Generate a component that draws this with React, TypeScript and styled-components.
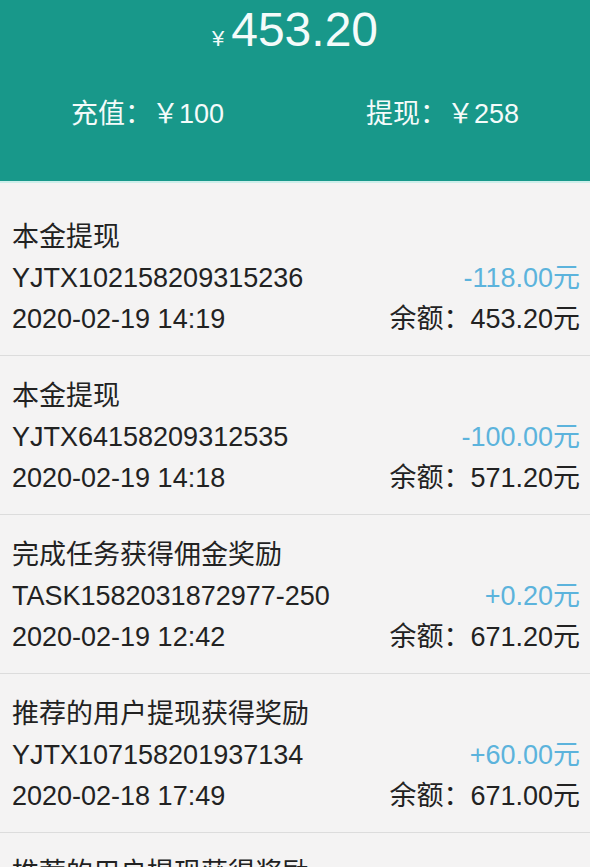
import React from "react";
import styled, { createGlobalStyle } from "styled-components";

const GlobalStyle = createGlobalStyle`
  html, body {
    margin: 0;
    padding: 0;
    background: #f4f3f3;
  }
  body {
    font-family: "Liberation Sans", "Noto Sans CJK SC", sans-serif;
    color: #222;
  }
`;

const Header = styled.header`
  background: #18988a;
  border-bottom: 2px solid #cdeeea;
  color: #f4fbfa;
`;

const Balance = styled.div`
  text-align: center;
  font-size: 48px;
  line-height: 60px;
  height: 60px;
`;

const Yen = styled.span`
  font-size: 22px;
  line-height: 1;
  margin-right: 7px;
`;

const Summary = styled.div`
  display: flex;
  margin-top: 39px;
  padding-bottom: 50px;
`;

const SummaryItem = styled.div`
  flex: 1;
  text-align: center;
  font-size: 27px;
  line-height: 30px;
  height: 32px;
`;

const List = styled.div`
  padding-top: 14px;
`;

const Row = styled.div`
  padding: 20px 10px 15px 12px;
  border-bottom: 1px solid #dcdcdc;
`;

const Line = styled.div`
  display: flex;
  justify-content: space-between;
  font-size: 27px;
  line-height: 41px;
  height: 41px;
  white-space: nowrap;
`;

const Amount = styled.span`
  color: #5cb3dc;
`;

type Record = {
  title: string;
  code: string;
  amount: string;
  time: string;
  balance: string;
};

const records: Record[] = [
  { title: "本金提现", code: "YJTX102158209315236", amount: "-118.00元", time: "2020-02-19 14:19", balance: "453.20元" },
  { title: "本金提现", code: "YJTX64158209312535", amount: "-100.00元", time: "2020-02-19 14:18", balance: "571.20元" },
  { title: "完成任务获得佣金奖励", code: "TASK1582031872977-250", amount: "+0.20元", time: "2020-02-19 12:42", balance: "671.20元" },
  { title: "推荐的用户提现获得奖励", code: "YJTX107158201937134", amount: "+60.00元", time: "2020-02-18 17:49", balance: "671.00元" },
  { title: "推荐的用户提现获得奖励", code: "YJTX107158201936521", amount: "+60.00元", time: "2020-02-18 17:48", balance: "611.00元" },
];

export default function App() {
  return (
    <>
      <GlobalStyle />
      <Header>
        <Balance>
          <Yen>¥</Yen>453.20
        </Balance>
        <Summary>
          <SummaryItem>充值：￥100</SummaryItem>
          <SummaryItem>提现：￥258</SummaryItem>
        </Summary>
      </Header>
      <List>
        {records.map((r, i) => (
          <Row key={i}>
            <Line>
              <span>{r.title}</span>
            </Line>
            <Line>
              <span>{r.code}</span>
              <Amount>{r.amount}</Amount>
            </Line>
            <Line>
              <span>{r.time}</span>
              <span>余额：{r.balance}</span>
            </Line>
          </Row>
        ))}
      </List>
    </>
  );
}
